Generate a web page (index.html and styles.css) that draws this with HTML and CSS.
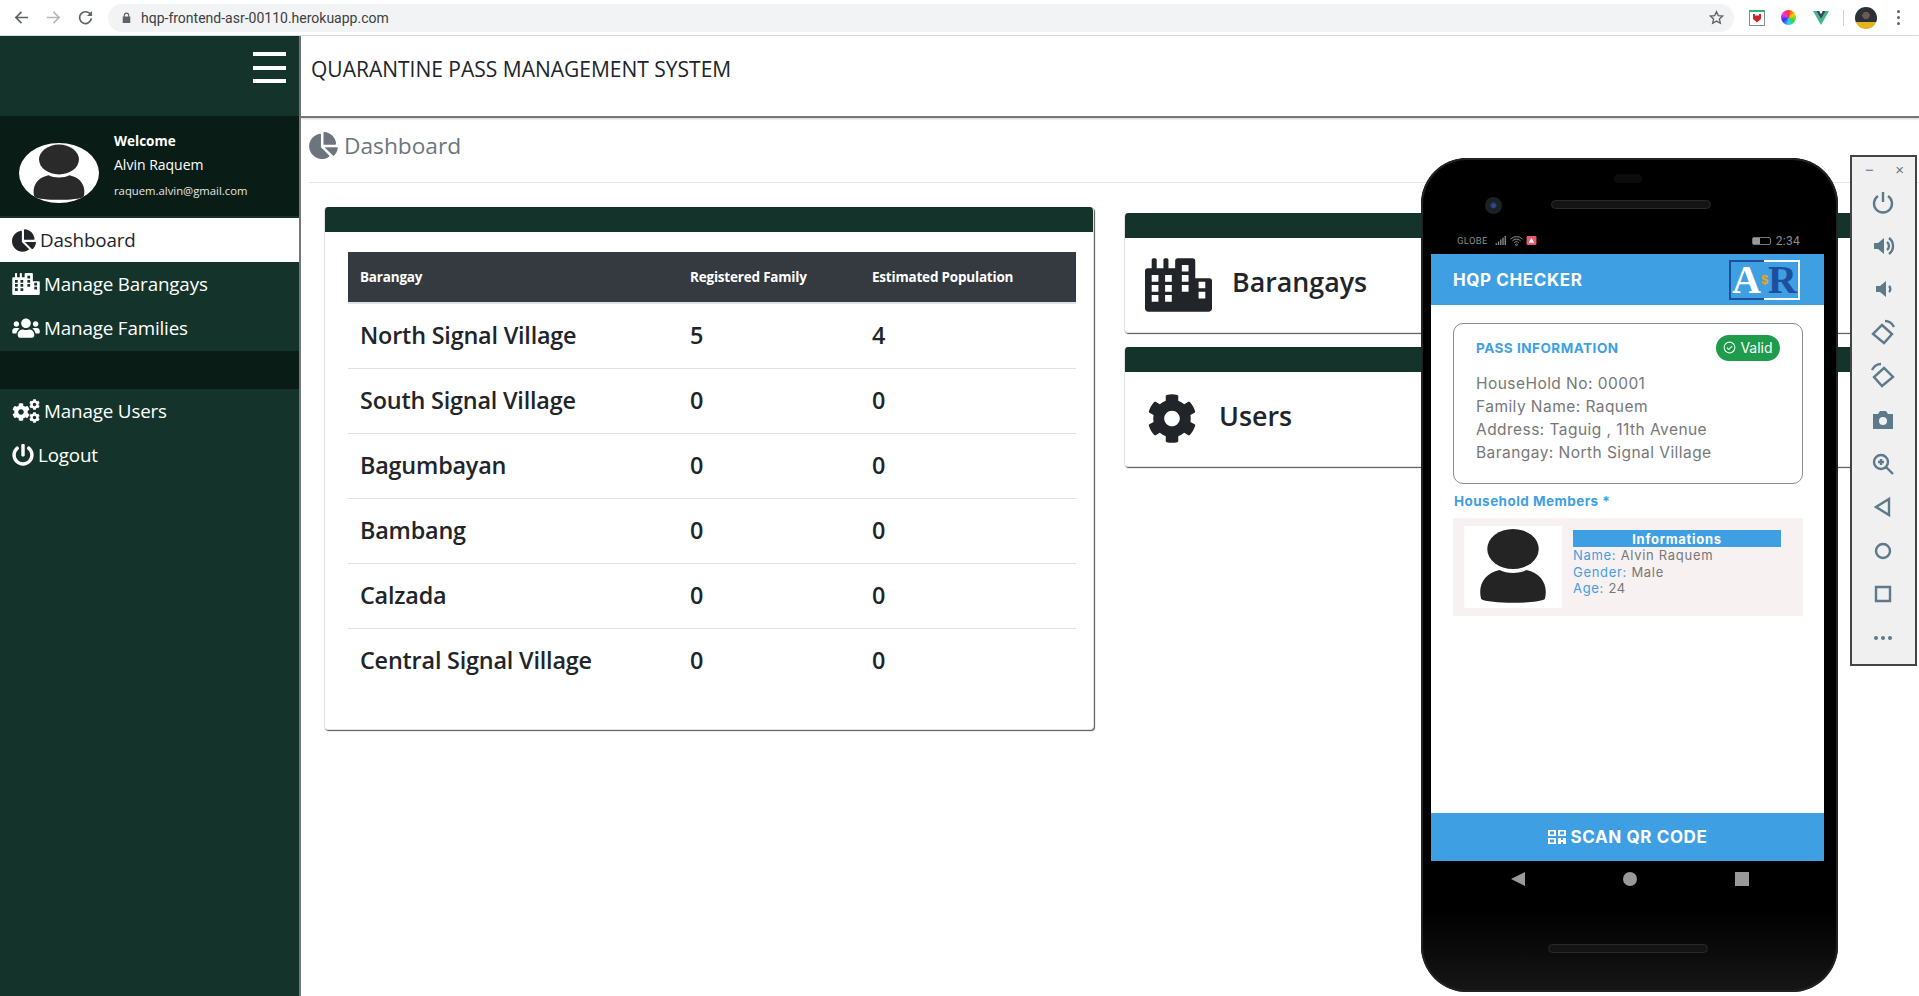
FILE: index.html
```html
<!DOCTYPE html>
<html lang="en">
<head>
  <meta charset="UTF-8">
  <title>Quarantine Pass Management System</title>
  <link rel="stylesheet" href="styles.css">
</head>
<body>
  <!-- icon sprite -->
  <svg class="sprite" xmlns="http://www.w3.org/2000/svg">
    <symbol id="i-pie" viewBox="0 0 544 512"><path d="M527.79 288H290.5l158.03 158.03c6.04 6.04 15.98 6.53 22.19.68 38.7-36.46 65.32-85.61 73.13-140.86 1.34-9.46-6.51-17.85-16.06-17.85zm-15.83-64.8C503.72 103.74 408.26 8.28 288.8.04 279.68-.59 272 7.1 272 16.24V240h223.77c9.14 0 16.82-7.68 16.19-16.8zM224 288V50.71c0-9.55-8.39-17.4-17.84-16.06C86.99 51.49-4.1 155.6.14 280.37 4.5 408.51 114.83 513.59 243.03 511.98c50.4-.63 96.97-16.87 135.26-44.03 7.9-5.6 8.42-17.23 1.57-24.08L224 288z"/></symbol>
    <symbol id="i-city" viewBox="0 0 640 512"><path fill-rule="evenodd" d="M616 192H480V24c0-13.26-10.74-24-24-24H312c-13.26 0-24 10.74-24 24v72h-64V16c0-8.84-7.16-16-16-16h-16c-8.84 0-16 7.16-16 16v80h-64V16c0-8.84-7.16-16-16-16H80c-8.84 0-16 7.16-16 16v80H24c-13.26 0-24 10.74-24 24v360c0 17.67 14.33 32 32 32h576c17.67 0 32-14.33 32-32V216c0-13.26-10.75-24-24-24zM64 352h64v64H64zm0-96h64v64H64zm0-96h64v64H64zm128 192h64v64h-64zm0-96h64v64h-64zm0-96h64v64h-64zm160 96h64v64h-64zm0-96h64v64h-64zm0-96h64v64h-64zm160 256h64v64h-64zm0-96h64v64h-64z"/></symbol>
    <symbol id="i-users" viewBox="0 0 640 512"><path d="M96 224c35.3 0 64-28.7 64-64s-28.7-64-64-64-64 28.7-64 64 28.7 64 64 64zm448 0c35.3 0 64-28.7 64-64s-28.7-64-64-64-64 28.7-64 64 28.7 64 64 64zm32 32h-64c-17.6 0-33.5 7.1-45.1 18.6 40.3 22.1 68.9 62 75.1 109.4h66c17.7 0 32-14.3 32-32v-32c0-35.3-28.7-64-64-64zm-256 0c61.9 0 112-50.1 112-112S381.9 32 320 32 208 82.1 208 144s50.1 112 112 112zm76.8 32h-8.3c-20.8 10-43.9 16-68.5 16s-47.6-6-68.5-16h-8.3C179.6 288 128 339.6 128 403.2V432c0 26.5 21.5 48 48 48h288c26.5 0 48-21.5 48-48v-28.8c0-63.6-51.6-115.2-115.2-115.2zm-223.7-13.4C161.5 263.1 145.6 256 128 256H64c-35.3 0-64 28.7-64 64v32c0 17.7 14.3 32 32 32h65.9c6.3-47.4 34.9-87.3 75.2-109.4z"/></symbol>
    <symbol id="i-cog" viewBox="0 0 512 512"><path d="M487.4 315.7l-42.6-24.6c4.3-23.2 4.3-47 0-70.2l42.6-24.6c4.9-2.8 7.1-8.6 5.5-14-11.1-35.6-30-67.8-54.7-94.6-3.8-4.1-10-5.1-14.8-2.3L380.8 110c-17.9-15.4-38.5-27.3-60.8-35.1V25.8c0-5.6-3.9-10.5-9.4-11.7-36.7-8.2-74.3-7.8-109.2 0-5.5 1.2-9.4 6.1-9.4 11.7V75c-22.2 7.9-42.8 19.8-60.8 35.1L88.7 85.5c-4.9-2.8-11-1.9-14.8 2.3-24.7 26.7-43.6 58.9-54.7 94.6-1.7 5.4.6 11.2 5.5 14L67.3 221c-4.3 23.2-4.3 47 0 70.2l-42.6 24.6c-4.9 2.8-7.1 8.6-5.5 14 11.1 35.6 30 67.8 54.7 94.6 3.8 4.1 10 5.1 14.8 2.3l42.6-24.6c17.9 15.4 38.5 27.3 60.8 35.1v49.2c0 5.6 3.9 10.5 9.4 11.7 36.7 8.2 74.3 7.8 109.2 0 5.5-1.2 9.4-6.1 9.4-11.7v-49.2c22.2-7.9 42.8-19.8 60.8-35.1l42.6 24.6c4.9 2.8 11 1.9 14.8-2.3 24.7-26.7 43.6-58.9 54.7-94.6 1.5-5.5-.7-11.3-5.6-14.1zM256 336c-44.1 0-80-35.9-80-80s35.9-80 80-80 80 35.9 80 80-35.9 80-80 80z"/></symbol>
    <symbol id="i-power" viewBox="0 0 512 512"><path d="M400 54.1c63 45 104 118.6 104 201.9 0 136.8-110.8 247.7-247.5 248C120 504.3 8.2 393 8 256.4 7.9 173.1 48.9 99.3 111.8 54.2c11.7-8.3 28-4.8 35 7.7L162.6 90c5.9 10.5 3.1 23.8-6.6 31-41.5 30.8-68 79.6-68 134.9-.1 92.3 74.5 168.1 168 168.1 91.6 0 168.6-74.2 168-169.1-.3-51.8-24.7-101.8-68.1-134-9.7-7.2-12.4-20.5-6.5-30.9l15.8-28.1c7-12.4 23.2-16.1 34.8-7.8zM296 264V24c0-13.3-10.7-24-24-24h-32c-13.3 0-24 10.7-24 24v240c0 13.3 10.7 24 24 24h32c13.3 0 24-10.7 24-24z"/></symbol>
    <symbol id="i-person" viewBox="0 0 80 80" preserveAspectRatio="none"><ellipse cx="40" cy="22" rx="21" ry="20"/><path d="M14 72c-3-14 3-26 15-29 6 4 16 4 22 0 12 3 18 15 15 29-6 5-46 5-52 0z"/></symbol>
  </svg>

  <!-- browser toolbar -->
  <div class="browser-bar">
    <svg class="nav-arrow" viewBox="0 0 16 16"><path d="M15 8H2M8 2 2 8l6 6"/></svg>
    <svg class="nav-arrow faded" viewBox="0 0 16 16"><path d="M1 8h13M8 2l6 6-6 6"/></svg>
    <svg class="nav-arrow" viewBox="0 0 16 16"><path d="M13.5 5A6.3 6.3 0 1 0 14.3 9"/><path class="solid" d="M15 1v5.500H9.500z"/></svg>
    <div class="omnibox">
      <svg class="lock" viewBox="0 0 10 12"><path d="M2 5V3.500a3 3 0 0 1 6 0V5h1.200v7H.8V5zm1.200 0h3.600V3.500a1.800 1.800 0 0 0-3.600 0z"/></svg>
      <span class="url">hqp-frontend-asr-00110.herokuapp.com</span>
      <svg class="star" viewBox="0 0 16 16"><path d="M8 1.800l1.900 4.200 4.600.5-3.400 3.100 1 4.500L8 11.800l-4.100 2.300 1-4.500L1.500 6.500l4.600-.5z"/></svg>
    </div>
    <div class="ext ext-shield"><svg viewBox="0 0 10 10"><path d="M1 1h2v1.500h4V1h2v5L5 9.500 1 6z"/></svg></div>
    <div class="ext-wheel"></div>
    <svg class="ext-vue" viewBox="0 0 16 14"><path fill="#41b883" d="M0 0h3.200L8 8.300 12.800 0H16L8 14z"/><path fill="#34495e" d="M3.200 0h3L8 3.200 9.800 0h3L8 8.300z"/></svg>
    <div class="bar-sep"></div>
    <div class="profile"></div>
    <div class="bar-dots"><i></i><i></i><i></i></div>
  </div>

  <div class="app">
    <aside class="sidebar">
      <div class="side-top">
        <div class="burger"><i></i><i></i><i></i></div>
      </div>
      <div class="side-user">
        <div class="side-avatar"><svg><use href="#i-person"/></svg></div>
        <div class="side-info">
          <strong>Welcome</strong>
          <span>Alvin Raquem</span>
          <small>raquem.alvin@gmail.com</small>
        </div>
      </div>
      <a class="side-link active"><svg class="ico-pie"><use href="#i-pie"/></svg>Dashboard</a>
      <a class="side-link"><svg class="ico-wide"><use href="#i-city"/></svg>Manage Barangays</a>
      <a class="side-link"><svg class="ico-wide"><use href="#i-users"/></svg>Manage Families</a>
      <div class="side-band"></div>
      <a class="side-link">
        <span class="ico-cogs">
          <svg class="cog-big"><use href="#i-cog"/></svg>
          <svg class="cog-a"><use href="#i-cog"/></svg>
          <svg class="cog-b"><use href="#i-cog"/></svg>
        </span>Manage Users</a>
      <a class="side-link logout"><svg class="ico-power"><use href="#i-power"/></svg>Logout</a>
    </aside>

    <main class="content">
      <header class="page-head">QUARANTINE PASS MANAGEMENT SYSTEM</header>
      <div class="page-title"><svg><use href="#i-pie"/></svg>Dashboard</div>

      <div class="panels">
        <section class="card table-card">
          <div class="card-top"></div>
          <div class="table-wrap">
            <table>
              <thead>
                <tr><th class="col-a">Barangay</th><th class="col-b">Registered Family</th><th>Estimated Population</th></tr>
              </thead>
              <tbody>
                <tr><td>North Signal Village</td><td>5</td><td>4</td></tr>
                <tr><td>South Signal Village</td><td>0</td><td>0</td></tr>
                <tr><td>Bagumbayan</td><td>0</td><td>0</td></tr>
                <tr><td>Bambang</td><td>0</td><td>0</td></tr>
                <tr><td>Calzada</td><td>0</td><td>0</td></tr>
                <tr><td>Central Signal Village</td><td>0</td><td>0</td></tr>
              </tbody>
            </table>
          </div>
        </section>

        <div class="stats">
          <section class="card stat">
            <div class="card-top"></div>
            <div class="stat-body stat-city"><svg><use href="#i-city"/></svg><span>Barangays</span></div>
          </section>
          <section class="card stat">
            <div class="card-top"></div>
            <div class="stat-body stat-cog"><svg><use href="#i-cog"/></svg><span>Users</span></div>
          </section>
        </div>
      </div>
    </main>
  </div>

  <!-- emulator window over the page -->
  <div class="phone">
    <div class="phone-pill"></div>
    <div class="phone-ear">
      <div class="phone-cam"></div>
      <div class="phone-speaker"></div>
    </div>
    <div class="status">
      <span class="carrier">GLOBE</span>
      <svg class="signal" viewBox="0 0 12 10"><path d="M0 8h1.500v2H0zm2.500-2H4v4H2.500zM5 4h1.500v6H5zm2.500-2H9v8H7.500zM10 0h1.500v10H10z"/></svg>
      <svg class="wifi" viewBox="0 0 14 10"><path d="M.5 3a9 9 0 0 1 13 0M2.500 5a6 6 0 0 1 9 0M4.500 7a3 3 0 0 1 5 0"/><circle cx="7" cy="9" r="1"/></svg>
      <svg class="warn" viewBox="0 0 11 10"><rect width="11" height="10" rx="1.500" fill="#e8586f"/><path fill="#fff" d="M5.500 2l3 5.500h-6z"/></svg>
      <span class="battery"><i></i></span>
      <span class="clock">2:34</span>
    </div>
    <div class="screen">
      <div class="app-head">
        <span>HQP CHECKER</span>
        <div class="logo"><b class="logo-a">A</b><b class="logo-s">$</b><b class="logo-r">R</b></div>
      </div>
      <div class="app-body">
        <div class="pass">
          <div class="pass-top">
            <span class="pass-title">PASS INFORMATION</span>
            <span class="valid">
              <svg viewBox="0 0 14 14"><circle cx="7" cy="7" r="5.800"/><path d="M4.300 7.200l2 2 3.500-3.800"/></svg>Valid
            </span>
          </div>
          <p>HouseHold No: 00001</p>
          <p>Family Name: Raquem</p>
          <p>Address: Taguig , 11th Avenue</p>
          <p>Barangay: North Signal Village</p>
        </div>
        <div class="members-label">Household Members *</div>
        <div class="member">
          <div class="member-pic"><svg><use href="#i-person"/></svg></div>
          <div class="member-info">
            <div class="info-head">Informations</div>
            <div><em>Name:</em> Alvin Raquem</div>
            <div><em>Gender:</em> Male</div>
            <div><em>Age:</em> 24</div>
          </div>
        </div>
      </div>
      <div class="scan">
        <svg viewBox="0 0 18 14"><path fill-rule="evenodd" d="M0 0h8v6H0zm2 1.500v3h4v-3zM10 0h8v6h-8zm2 1.500v3h4v-3zM0 8h8v6H0zm2 1.500v3h4v-3zM10 8h3v2h2V8h3v6h-3v-2h-2v2h-3z"/></svg>SCAN QR CODE
      </div>
    </div>
    <div class="soft-keys">
      <span class="key-back"></span>
      <span class="key-home"></span>
      <span class="key-recent"></span>
    </div>
    <div class="phone-speaker lower"></div>
  </div>

  <div class="emu-bar">
    <div class="emu-title"><span>&minus;</span><span>&times;</span></div>
    <svg viewBox="0 0 24 24"><path class="line" d="M7 6a9 9 0 1 0 10 0M12 2v10"/></svg>
    <svg viewBox="0 0 24 24"><path class="fill" d="M3 9h4l6-5v16l-6-5H3z"/><path class="line" d="M16 8a5 5 0 0 1 0 8M18 4a10 10 0 0 1 0 16"/></svg>
    <svg viewBox="0 0 24 24"><path class="fill" d="M5 9h4l6-5v16l-6-5H5z"/><path class="line" d="M18 9a4 4 0 0 1 0 6"/></svg>
    <svg viewBox="0 0 24 24"><path class="line" d="M11 4l10 9-8 9L2 13zM14 0c4 0 7 2 9 6"/></svg>
    <svg viewBox="0 0 24 24"><path class="line" d="M13 4L3 13l8 9 11-9zM10 0C6 0 3 2 1 6"/></svg>
    <svg viewBox="0 0 24 24"><path class="fill" fill-rule="evenodd" d="M2 6h5l2-3h6l2 3h5v15H2zm10 3a4 4 0 1 0 0 8 4 4 0 0 0 0-8z"/></svg>
    <svg viewBox="0 0 24 24"><path class="line" d="M10 3a7 7 0 1 0 0 14 7 7 0 0 0 0-14zM15 15l7 7M10 7v6M7 10h6"/></svg>
    <svg viewBox="0 0 24 24"><path class="line" d="M18 4v16L5 12z"/></svg>
    <svg viewBox="0 0 24 24"><circle class="line" cx="12" cy="12" r="7"/></svg>
    <svg viewBox="0 0 24 24"><path class="line" d="M5 5h14v14H5z"/></svg>
    <svg viewBox="0 0 24 24"><circle class="fill" cx="5" cy="12" r="2"/><circle class="fill" cx="12" cy="12" r="2"/><circle class="fill" cx="19" cy="12" r="2"/></svg>
  </div>
</body>
</html>
```

FILE: styles.css
```css
* {
  margin: 0;
  padding: 0;
  box-sizing: border-box;
}

body {
  font-family: 'Open Sans', sans-serif;
  background-color: white;
  color: #212529;
  height: 100vh;
  overflow: hidden;
  display: flex;
  flex-direction: column;
}

.sprite {
  position: absolute;
  width: 0;
  height: 0;
}

svg {
  fill: currentColor;
}

/* browser toolbar */
.browser-bar {
  height: 36px;
  flex: none;
  display: flex;
  align-items: center;
  border-bottom: 1px solid #dadce0;
  padding-left: 14px;
}

.nav-arrow {
  width: 15px;
  height: 15px;
  margin-right: 17px;
  fill: none;
  stroke: #5f6368;
  stroke-width: 1.8;
}

.nav-arrow .solid {
  fill: #5f6368;
  stroke: none;
}

.nav-arrow.faded {
  stroke: #b6b9bd;
}

.omnibox {
  width: 1626px;
  height: 28px;
  margin-left: -2px;
  background-color: #f1f3f4;
  border-radius: 14px;
  display: flex;
  align-items: center;
  padding-left: 14px;
}

.lock {
  width: 9px;
  height: 11px;
  fill: #5f6368;
}

.url {
  margin-left: 10px;
  font-family: 'Roboto', sans-serif;
  font-size: 14px;
  color: #3c4043;
  flex: 1;
}

.star {
  width: 15px;
  height: 15px;
  margin-right: 10px;
  fill: none;
  stroke: #5f6368;
  stroke-width: 1.400;
}

.ext {
  width: 16px;
  height: 16px;
  margin-left: 15px;
  border: 1px solid #888;
  border-top: 2px solid #2fb573;
  display: flex;
  align-items: center;
  justify-content: center;
}

.ext svg {
  width: 10px;
  height: 10px;
  fill: #c62828;
}

.ext-wheel {
  width: 15px;
  height: 15px;
  margin-left: 16px;
  border-radius: 50%;
  background: conic-gradient(#f33, #fc0, #3d3, #3cf, #33e, #e3e, #f33);
}

.ext-vue {
  width: 16px;
  height: 14px;
  margin-left: 17px;
}

.bar-sep {
  width: 1px;
  height: 16px;
  margin-left: 14px;
  background-color: #d0d3d6;
}

.profile {
  width: 22px;
  height: 22px;
  margin-left: 11px;
  border-radius: 50%;
  background: radial-gradient(circle at 50% 38%, #6b5a50 0 20%, transparent 22%), linear-gradient(180deg, #2c3138 0 68%, #e2b422 68% 100%);
}

.bar-dots {
  margin-left: 20px;
  display: flex;
  flex-direction: column;
  gap: 3px;
}

.bar-dots i {
  display: block;
  width: 3px;
  height: 3px;
  border-radius: 50%;
  background-color: #5f6368;
}

/* page */
.app {
  flex: 1;
  display: flex;
  min-height: 0;
}

.sidebar {
  width: 301px;
  flex: none;
  background-color: #14342b;
  border-right: 2px solid #777;
  color: white;
}

.side-top {
  height: 80px;
  display: flex;
  justify-content: flex-end;
  padding: 16px 13px 0 0;
}

.burger {
  width: 33px;
  display: flex;
  flex-direction: column;
  gap: 9.500px;
}

.burger i {
  display: block;
  height: 4px;
  background-color: white;
}

.side-user {
  height: 100px;
  margin-bottom: 2px;
  background-color: #0a1c16;
  display: flex;
  padding-left: 19px;
}

.side-avatar {
  width: 80px;
  height: 60px;
  margin-top: 27px;
  border-radius: 50%;
  background-color: white;
  color: #2a2a2a;
  overflow: hidden;
  display: flex;
  justify-content: center;
  align-items: center;
}

.side-avatar svg {
  width: 76px;
  height: 60px;
  flex: none;
}

.side-info {
  margin-left: 15px;
  padding-top: 14px;
  display: flex;
  flex-direction: column;
}

.side-info strong {
  font-size: 13.500px;
  line-height: 22px;
}

.side-info span {
  font-size: 14px;
  line-height: 26px;
}

.side-info small {
  font-size: 11.300px;
  line-height: 25px;
  color: #e6e6e6;
}

.side-link {
  height: 44px;
  display: flex;
  align-items: center;
  padding-left: 12px;
  font-size: 18.800px;
  letter-spacing: -0.15px;
  color: white;
}

.side-link.active {
  background-color: white;
  color: #212529;
}

.ico-pie {
  width: 24px;
  height: 23px;
  margin-right: 4px;
}

.ico-wide {
  width: 28px;
  height: 22px;
  margin-right: 4px;
}

.ico-cogs {
  position: relative;
  width: 28px;
  height: 24px;
  margin-right: 4px;
}

.cog-big {
  position: absolute;
  left: 0;
  top: 4px;
  width: 18px;
  height: 18px;
}

.cog-a {
  position: absolute;
  right: 0;
  top: 0;
  width: 11px;
  height: 11px;
}

.cog-b {
  position: absolute;
  right: 0;
  bottom: 0;
  width: 11px;
  height: 11px;
}

.ico-power {
  width: 22px;
  height: 24px;
  margin-right: 4px;
}

.side-band {
  height: 38px;
  margin-top: 1px;
  background-color: #0a1c16;
}

.content {
  flex: 1;
  min-width: 0;
}

.page-head {
  height: 82px;
  padding: 19px 0 0 10px;
  font-size: 21px;
  line-height: 28px;
  border-bottom: 2px solid #777;
  box-shadow: 0 1px 2px rgba(0, 0, 0, 0.2);
}

.page-title {
  height: 65px;
  margin-left: 8px;
  padding-top: 14px;
  display: flex;
  align-items: flex-start;
  font-size: 22.700px;
  line-height: 28px;
  color: #6c757d;
  border-bottom: 1px solid #e4e7ea;
}

.page-title svg {
  width: 29px;
  height: 27px;
  margin-right: 6px;
}

.panels {
  display: flex;
  align-items: flex-start;
  padding: 24px 0 0 23px;
  gap: 30px;
}

.card {
  background-color: white;
  border: 1px solid #e2e2e2;
  border-top: none;
  border-radius: 4px;
  box-shadow: 1px 1px 1px #555;
  overflow: hidden;
}

.card-top {
  height: 25px;
  background-color: #14342b;
}

.table-card {
  width: 770px;
  height: 523px;
}

.table-wrap {
  padding: 20px 17px 0 23px;
}

table {
  width: 100%;
  border-collapse: collapse;
}

th {
  height: 51px;
  padding: 0 12px;
  text-align: left;
  font-size: 13.500px;
  letter-spacing: -0.2px;
  color: white;
  background-color: #343a40;
  border-bottom: 2px solid #dee2e6;
}

.col-a {
  width: 330px;
}

.col-b {
  width: 182px;
}

td {
  height: 65px;
  padding: 0 12px 1px;
  font-size: 23.400px;
  font-weight: 600;
  letter-spacing: -0.2px;
  border-bottom: 1px solid #dee2e6;
}

tbody tr:last-child td {
  border-bottom: none;
}

.stats {
  margin-top: 6px;
  width: 760px;
  display: flex;
  flex-direction: column;
  gap: 14px;
}

.stat {
  height: 120px;
}

.stat-body {
  height: 95px;
  display: flex;
  align-items: center;
  font-size: 26.800px;
  font-weight: 600;
  padding-bottom: 2px;
}

.stat-body span {
  margin-bottom: 6px;
}

.stat-city {
  padding-left: 20px;
  gap: 20px;
}

.stat-city svg {
  width: 67px;
  height: 54px;
}

.stat-cog {
  padding-left: 22px;
  gap: 22px;
}

.stat-cog svg {
  width: 50px;
  height: 53px;
}

/* phone window, lies over the page */
.phone {
  position: absolute;
  left: 1421px;
  top: 158px;
  width: 417px;
  height: 834px;
  padding: 0 14px 0 10px;
  border-radius: 46px;
  background: linear-gradient(180deg, #000 0 90%, #161616 100%);
  box-shadow: inset 0 0 0 2px #222;
}

.phone-pill {
  width: 28px;
  height: 9px;
  margin: 16px auto 0;
  border-radius: 5px;
  background-color: #0c0c0c;
}

.phone-ear {
  position: relative;
  margin-top: 17px;
  padding-left: 6px;
}

.phone-cam {
  position: absolute;
  left: 54px;
  top: -3px;
  width: 17px;
  height: 17px;
  border-radius: 50%;
  background: radial-gradient(circle, #2b4a8c 0 15%, #1c2027 30% 100%);
}

.phone-speaker {
  width: 160px;
  height: 9px;
  margin: 0 auto;
  border-radius: 5px;
  border: 1px solid #2a2a2a;
  background-color: #141414;
}

.status {
  height: 17px;
  margin-top: 23px;
  padding-left: 26px;
  display: flex;
  align-items: center;
  color: #8c8c8c;
}

.carrier {
  font-family: 'Roboto', sans-serif;
  font-size: 9.500px;
  letter-spacing: 0.3px;
  width: 38px;
}

.signal {
  width: 12px;
  height: 9px;
}

.wifi {
  width: 13px;
  height: 10px;
  margin-left: 3px;
  fill: #8c8c8c;
  stroke: #8c8c8c;
  stroke-width: 1;
  fill-opacity: 0.1;
}

.warn {
  width: 11px;
  height: 9px;
  margin-left: 3px;
}

.battery {
  width: 19px;
  height: 8px;
  margin-left: auto;
  border: 1px solid #777;
  border-radius: 2px;
  display: block;
}

.battery i {
  display: block;
  width: 7px;
  height: 100%;
  background-color: #999;
}

.clock {
  margin: 0 24px 0 5px;
  font-family: 'Roboto', sans-serif;
  font-size: 12px;
  letter-spacing: 0.3px;
}

.screen {
  height: 607px;
  margin-top: 5px;
  background-color: white;
  display: flex;
  flex-direction: column;
  font-family: 'Inter', sans-serif;
}

.app-head {
  height: 51px;
  flex: none;
  background-color: #3f9fe3;
  color: white;
  display: flex;
  align-items: center;
  justify-content: space-between;
  padding: 0 24px 0 22px;
  font-size: 17px;
  font-weight: 700;
  letter-spacing: 0.6px;
}

.logo {
  width: 71px;
  height: 40px;
  border: 2px solid;
  border-image: linear-gradient(90deg, #1d4f9c 50%, #fff 50%) 1;
  font-family: 'Liberation Serif', serif;
  letter-spacing: 0;
  display: flex;
  align-items: center;
  justify-content: center;
}

.logo-a {
  color: white;
  font-size: 40px;
  line-height: 36px;
}

.logo-r {
  color: #1d4f9c;
  font-size: 40px;
  line-height: 36px;
}

.logo-s {
  font-size: 13px;
  line-height: 15px;
  color: #f2a31b;
  font-family: 'Liberation Sans', sans-serif;
}

.app-body {
  flex: 1;
  padding: 18px 21px 0 22px;
}

.pass {
  height: 161px;
  border: 1.500px solid #8c8c8c;
  border-radius: 10px;
  padding: 10px 22px 0 22px;
}

.pass-top {
  display: flex;
  justify-content: space-between;
  align-items: center;
  height: 27px;
  margin-bottom: 11px;
  font-weight: 700;
}

.pass-title {
  font-size: 13.500px;
  letter-spacing: 0.5px;
  color: #3f9fe3;
}

.valid {
  width: 64px;
  height: 26px;
  border-radius: 13px;
  background-color: #1e9b4b;
  color: white;
  font-size: 14px;
  font-weight: 400;
  display: flex;
  align-items: center;
  justify-content: center;
  gap: 4px;
}

.valid svg {
  width: 13px;
  height: 13px;
  fill: none;
  stroke: white;
  stroke-width: 1.100;
}

.pass p {
  font-size: 15.500px;
  line-height: 23px;
  letter-spacing: 0.45px;
  color: #777;
}

.members-label {
  margin: 7px 0 0 1px;
  height: 27px;
  font-size: 13.500px;
  font-weight: 700;
  line-height: 14px;
  letter-spacing: 0.45px;
  color: #3f9fe3;
  padding-top: 3px;
}

.member {
  height: 98px;
  background-color: #f7f1f1;
  padding: 8px 22px 0 11px;
  display: flex;
}

.member-pic {
  width: 98px;
  height: 82px;
  background-color: white;
  color: #242424;
  display: flex;
  align-items: center;
  justify-content: center;
}

.member-pic svg {
  width: 98px;
  height: 80px;
}

.member-info {
  flex: 1;
  margin: 4px 0 0 11px;
  font-size: 13px;
  line-height: 16.500px;
  letter-spacing: 0.7px;
  color: #777;
}

.member-info em {
  font-style: normal;
  color: #3f9fe3;
}

.info-head {
  height: 17px;
  line-height: 18px;
  background-color: #3f9fe3;
  color: white;
  font-weight: 700;
  text-align: center;
}

.scan {
  height: 48px;
  flex: none;
  background-color: #3f9fe3;
  color: white;
  display: flex;
  align-items: center;
  justify-content: center;
  gap: 5px;
  font-size: 17px;
  font-weight: 700;
  letter-spacing: 0.6px;
}

.scan svg {
  width: 18px;
  height: 14px;
}

.soft-keys {
  height: 36px;
  display: flex;
  align-items: center;
}

.key-back {
  width: 0;
  height: 0;
  margin-left: 80px;
  border-top: 7px solid transparent;
  border-bottom: 7px solid transparent;
  border-right: 14px solid #999;
}

.key-home {
  width: 14px;
  height: 14px;
  margin-left: 98px;
  border-radius: 50%;
  background-color: #999;
}

.key-recent {
  width: 14px;
  height: 14px;
  margin-left: 98px;
  background-color: #999;
}

.phone-speaker.lower {
  margin-top: 47px;
}

/* emulator side toolbar */
.emu-bar {
  position: absolute;
  left: 1850px;
  top: 155px;
  width: 67px;
  height: 511px;
  padding-right: 1px;
  background-color: #f0f0f0;
  border: 2px solid #444;
  display: flex;
  flex-direction: column;
  align-items: center;
}

.emu-title {
  width: 100%;
  height: 24px;
  display: flex;
  justify-content: space-between;
  align-items: center;
  padding: 0 10px 0 13px;
  font-family: 'Liberation Sans', sans-serif;
  font-size: 15px;
  color: #5c7a8a;
}

.emu-bar svg {
  width: 24px;
  height: 24px;
  margin: 9px 0 10.600px;
  flex: none;
  overflow: visible;
}

.emu-bar .line {
  fill: none;
  stroke: #5c7a8a;
  stroke-width: 2.400;
}

.emu-bar .fill {
  fill: #5c7a8a;
}
```
